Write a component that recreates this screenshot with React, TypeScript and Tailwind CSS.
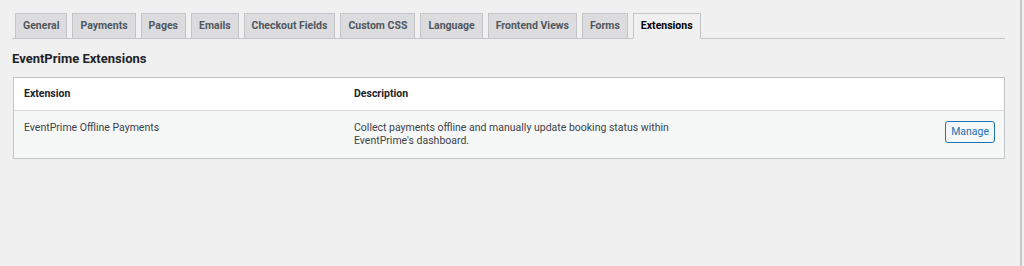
import React from 'react';

const tabs = [
  'General',
  'Payments',
  'Pages',
  'Emails',
  'Checkout Fields',
  'Custom CSS',
  'Language',
  'Frontend Views',
  'Forms',
  'Extensions',
];

const App = () => {
  return (
    <div className="flex h-[266px] w-[1024px] bg-[#f0f0f1] font-['Roboto',sans-serif] text-[#3c434a]">
      <div className="w-[1005px] pl-3">
        {/* Tabs */}
        <nav className="mt-[13px] flex gap-[5px] border-b border-[#c3c4c7] pl-[3px]">
          {tabs.map((tab) => {
            const active = tab === 'Extensions';
            return (
              <span
                key={tab}
                className={
                  active
                    ? '-mb-px flex h-[26px] items-center border border-b-[#f0f0f1] border-[#c3c4c7] bg-[#f0f0f1] px-[7px] text-[10.5px] font-bold text-black'
                    : 'flex h-[25px] items-center border border-b-0 border-[#c3c4c7] bg-[#dcdcde] px-[7px] text-[10.5px] font-bold text-[#50575e]'
                }
              >
                {tab}
              </span>
            );
          })}
        </nav>

        <h2 className="mt-[11px] text-[13px] font-bold leading-[18px] text-[#1d2327]">EventPrime Extensions</h2>

        {/* Table */}
        <div className="mt-[9px] ml-px border border-[#c3c4c7] text-[10.5px]">
          <div className="flex h-[33px] items-center border-b border-[#dcdcde] bg-white font-bold text-[#1d2327]">
            <div className="w-[340px] pl-[10px]">Extension</div>
            <div>Description</div>
          </div>
          <div className="flex h-[47px] items-start bg-[#f6f7f7] pt-[10px]">
            <div className="w-[340px] pl-[10px] leading-[13px]">EventPrime Offline Payments</div>
            <div className="w-[330px] leading-[13px]">
              Collect payments offline and manually update booking status within EventPrime's dashboard.
            </div>
            <div className="flex flex-1 justify-end pr-[9px]">
              <button className="h-[22px] rounded-[3px] border border-[#2271b1] bg-[#f6f7f7] px-[5px] text-[10.5px] text-[#2271b1]">
                Manage
              </button>
            </div>
          </div>
        </div>
      </div>
      <div className="ml-auto mr-[2px] w-[2px] bg-[#c8c8c8]" />
    </div>
  );
};

export default App;
